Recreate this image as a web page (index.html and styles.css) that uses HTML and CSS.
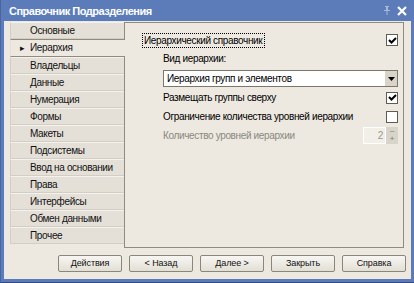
FILE: index.html
```html
<!DOCTYPE html>
<html>
<head>
<meta charset="utf-8">
<link rel="stylesheet" href="styles.css">
</head>
<body>
<div class="window">
  <div class="titlebar">
    <span class="title">Справочник Подразделения</span>
    <span class="tb-icons">
      <svg class="pin" width="8" height="9" viewBox="0 0 8 9"><path d="M2 0h4v1H5v3h2v1H4.5v4h-1V5H1V4h2V1H2z" fill="#a9b8d6"/></svg>
      <svg class="close" width="10" height="10" viewBox="0 0 10 10"><path d="M1 1L9 9M9 1L1 9" stroke="#fff" stroke-width="2.2"/></svg>
    </span>
  </div>
  <div class="client">
    <div class="main">
      <ul class="tabs">
        <li class="tab">Основные</li>
        <li class="tab active"><span class="marker">&#9656;</span>Иерархия</li>
        <li class="tab">Владельцы</li>
        <li class="tab">Данные</li>
        <li class="tab">Нумерация</li>
        <li class="tab">Формы</li>
        <li class="tab">Макеты</li>
        <li class="tab">Подсистемы</li>
        <li class="tab">Ввод на основании</li>
        <li class="tab">Права</li>
        <li class="tab">Интерфейсы</li>
        <li class="tab">Обмен данными</li>
        <li class="tab">Прочее</li>
      </ul>
      <div class="panel">
        <div class="row row-first">
          <span class="focus-label">Иерархический справочник</span>
          <span class="check checked"><svg width="9" height="7" viewBox="0 0 9 7"><path d="M1 3l2.5 2.5L8 1" stroke="#000" stroke-width="2" fill="none"/></svg></span>
        </div>
        <div class="row row-label">Вид иерархии:</div>
        <div class="select">
          <span class="select-text">Иерархия групп и элементов</span>
          <span class="select-btn"><svg width="7" height="4" viewBox="0 0 7 4"><path d="M0 0h7L3.5 4z" fill="#000"/></svg></span>
        </div>
        <div class="row row-item">
          <span>Размещать группы сверху</span>
          <span class="check checked"><svg width="9" height="7" viewBox="0 0 9 7"><path d="M1 3l2.5 2.5L8 1" stroke="#000" stroke-width="2" fill="none"/></svg></span>
        </div>
        <div class="row row-item">
          <span>Ограничение количества уровней иерархии</span>
          <span class="check"></span>
        </div>
        <div class="row row-item disabled">
          <span>Количество уровней иерархии</span>
          <span class="spin">
            <span class="spin-val">2</span>
            <span class="spin-btns"><span>&#8211;</span><span>+</span></span>
          </span>
        </div>
      </div>
    </div>
    <div class="buttons">
      <button class="btn">Действия</button>
      <button class="btn">&lt; Назад</button>
      <button class="btn">Далее &gt;</button>
      <button class="btn">Закрыть</button>
      <button class="btn">Справка</button>
    </div>
  </div>
</div>
</body>
</html>
```
FILE: styles.css
```css
* { box-sizing: border-box; }
html, body { margin: 0; padding: 0; }
body {
  width: 414px;
  height: 283px;
  font-family: "Liberation Sans", Arial, sans-serif;
  font-size: 10px;
  letter-spacing: -0.35px;
  color: #000;
  overflow: hidden;
}
.window {
  width: 414px;
  height: 283px;
  background: #5b7cb9;
  display: flex;
  flex-direction: column;
  padding: 0 3px 3px 3px;
  border-left: 1px solid #4a66a0;
  border-bottom: 1px solid #2f4a86;
}
.titlebar {
  height: 21px;
  display: flex;
  align-items: center;
  justify-content: space-between;
  padding: 0 4px 0 5px;
  flex: none;
}
.title {
  color: #fff;
  font-weight: bold;
  font-size: 11px;
  letter-spacing: -0.5px;
}
.tb-icons {
  display: flex;
  align-items: center;
  gap: 6px;
}
.client {
  flex: 1;
  background: #ede9e1;
  display: flex;
  flex-direction: column;
  padding-top: 1px;
}
.main {
  display: flex;
  height: 226px;
  padding: 0 7px 0 6px;
}
.tabs {
  list-style: none;
  margin: 0;
  padding: 0;
  width: 114px;
  flex: none;
  position: relative;
  z-index: 1;
}
.tab {
  height: 17px;
  line-height: 15px;
  padding-left: 19px;
  background: #e4e0d8;
  border-left: 1px solid #d2cec4;
  border-bottom: 1px solid #d2cec4;
  border-top: 1px solid #f4f2ee;
  white-space: nowrap;
  color: #111;
}
.tab.active {
  background: #ede9e1;
  border-top: 1px solid #8f8b7f;
  border-bottom: 1px solid #8f8b7f;
  border-left: 1px solid #e4e0d8;
  margin-right: -1px;
  height: 18px;
  padding-left: 9px;
}
.marker {
  display: inline-block;
  width: 10px;
  font-size: 9px;
}
.panel {
  flex: 1;
  border: 1px solid #8f8b7f;
  padding: 9px 5px 0 17px;
  display: flex;
  flex-direction: column;
  white-space: nowrap;
}
.row {
  display: flex;
  align-items: center;
  justify-content: space-between;
}
.row-first {
  height: 16px;
}
.focus-label {
  border: 1px dotted #000;
  padding: 0 2px 0 1px;
  line-height: 13px;
}
.row-label {
  height: 18px;
  padding-left: 21px;
  padding-top: 2px;
}
.row-item {
  height: 19px;
  padding-left: 21px;
}
.check {
  width: 12px;
  height: 12px;
  border: 1px solid #5e5c55;
  background: #fff;
  display: flex;
  align-items: center;
  justify-content: center;
}
.select {
  margin: 4px 0 1px 21px;
  height: 17px;
  display: flex;
  border: 1px solid #7a776d;
  background: #fff;
}
.select-text {
  flex: 1;
  padding-left: 3px;
  line-height: 15px;
}
.select-btn {
  width: 12px;
  background: #d8d4ca;
  display: flex;
  align-items: center;
  justify-content: center;
}
.disabled { color: #8a887f; }
.spin {
  display: flex;
  width: 35px;
  height: 17px;
}
.spin-val {
  flex: 1;
  background: #f2efe9;
  border: 1px solid #fff;
  text-align: right;
  padding-right: 2px;
  line-height: 15px;
  color: #9a988f;
}
.spin-btns {
  width: 12px;
  background: #d8d4ca;
  display: flex;
  flex-direction: column;
  font-size: 8px;
  line-height: 8px;
  text-align: center;
  color: #77756d;
}
.spin-btns span { height: 8px; }
.buttons {
  flex: 1;
  display: flex;
  align-items: center;
  padding-left: 54px;
  gap: 7px;
  padding-bottom: 1px;
}
.btn {
  width: 64px;
  height: 17px;
  padding: 0;
  font-family: "Liberation Sans", Arial, sans-serif;
  font-size: 9px;
  letter-spacing: -0.1px;
  color: #111;
  border: 1px solid #8a8779;
  border-radius: 2px;
  background: linear-gradient(#f7f6f2, #e2dfd5);
}
```
